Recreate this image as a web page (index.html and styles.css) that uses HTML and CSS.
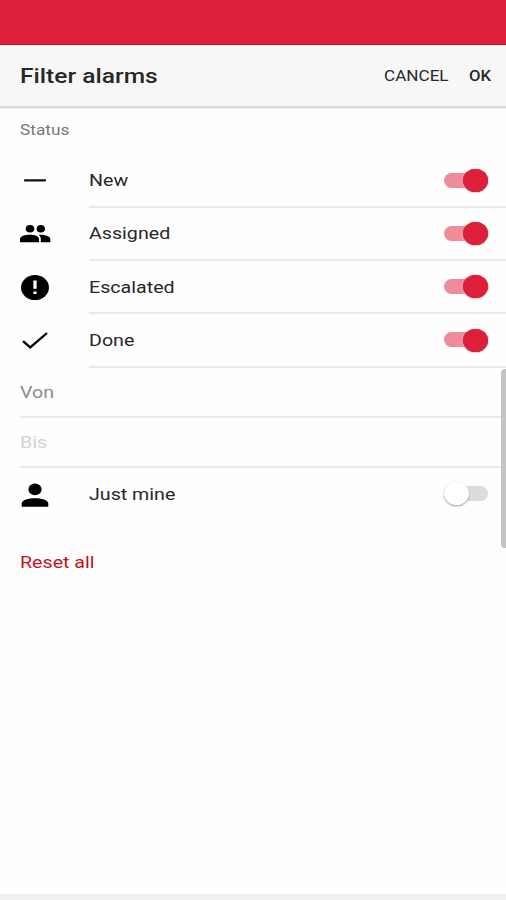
FILE: index.html
```html
<!DOCTYPE html>
<html lang="en">
<head>
<meta charset="utf-8">
<title>Filter alarms</title>
<link rel="stylesheet" href="styles.css">
</head>
<body>
<div class="screen">
  <div class="statusbar"></div>
  <header class="toolbar">
    <h1 class="title wide">Filter alarms</h1>
    <div class="cancel"><span class="wide">CANCEL</span></div>
    <div class="ok"><span class="wide">OK</span></div>
  </header>
  <main>
    <div class="section"><span class="wide">Status</span></div>
    <div class="row">
      <svg class="icon" viewBox="0 0 30 26"><path d="M5 13.4H25" stroke="#111" stroke-width="2.1" stroke-linecap="round"/></svg>
      <div class="cell"><span class="wide">New</span><i class="toggle on"></i></div>
    </div>
    <div class="row">
      <svg class="icon" viewBox="0 0 30 26"><ellipse cx="10" cy="8.7" rx="4.3" ry="3.8"/><ellipse cx="20.8" cy="8.7" rx="4.2" ry="3.8"/><path d="M0 22.3V19C0 16.2 5 14.7 10 14.7S19 16.2 19 19V22.3ZM20.8 22.3V19C20.8 17.1 20 15.8 18.5 14.8C24 14.3 30.3 16 30.3 19V22.3Z"/></svg>
      <div class="cell"><span class="wide">Assigned</span><i class="toggle on"></i></div>
    </div>
    <div class="row">
      <svg class="icon" viewBox="0 0 30 26"><ellipse cx="15" cy="13.6" rx="14" ry="12.5"/><path d="M13.4 6.6H16.6V14.8H13.4ZM13.4 17.4H16.6V20.1H13.4Z" fill="#fff"/></svg>
      <div class="cell"><span class="wide">Escalated</span><i class="toggle on"></i></div>
    </div>
    <div class="row">
      <svg class="icon" viewBox="0 0 30 26"><path d="M3 14.2L10.2 20.4L27 6" fill="none" stroke="#000" stroke-width="2.3"/></svg>
      <div class="cell"><span class="wide">Done</span><i class="toggle on"></i></div>
    </div>
    <div class="date"><span class="wide">Von</span></div>
    <div class="date empty"><span class="wide">Bis</span></div>
    <div class="row mine">
      <svg class="icon" viewBox="0 0 30 26"><ellipse cx="15" cy="7.4" rx="6.6" ry="5.9"/><path d="M1.7 24.7V21.5C1.7 18 8.6 16.2 15 16.2S28.3 18 28.3 21.5V24.7Z"/></svg>
      <div class="cell"><span class="wide">Just mine</span><i class="toggle"></i></div>
    </div>
    <div class="reset"><span class="wide">Reset all</span></div>
  </main>
  <div class="scrollbar"></div>
  <div class="bottom"></div>
</div>
</body>
</html>
```
FILE: styles.css
```css
* { box-sizing: border-box; }
body { margin: 0; background: #fff; }
.screen {
  position: relative;
  display: flex;
  flex-direction: column;
  width: 506px;
  height: 900px;
  overflow: hidden;
  background: #fefefe;
  color: #272727;
  font: 400 17px/20px Roboto, sans-serif;
}
.wide { display: inline-block; transform: scaleX(1.155); transform-origin: 0 50%; white-space: nowrap; }
.statusbar { height: 45px; background: #de1f3a; border-bottom: 1px solid #cf1230; }
.toolbar {
  display: flex;
  align-items: center;
  height: 61px;
  padding-left: 20px;
  background: #f7f7f7;
  box-shadow: 0 1px 0 #d6d6d6, 0 2px 0 #d9d9d9, 0 3px 1px #ececec;
}
.title { flex: 1; margin: 0; font-size: 21px; line-height: 24px; font-weight: 500; transform: scaleX(1.17); }
.cancel, .ok { padding-top: 2px; font-size: 14.5px; }
.cancel { width: 85px; }
.cancel .wide { transform: scaleX(1.18); }
.ok { width: 37px; font-weight: 500; }
main { flex: 1; }
.section { height: 48.6px; padding: 15px 0 0 20px; color: #777; font-size: 14.5px; }
.section .wide { transform: scaleX(1.19); }
.row { display: flex; height: 53.3px; padding-left: 20px; }
.icon { width: 30px; height: 26px; margin: 12.5px 39px 0 0; overflow: visible; flex: none; }
.cell {
  display: flex;
  flex: 1;
  justify-content: space-between;
  align-items: flex-start;
  padding: 15.4px 18px 0 0;
  border-bottom: 2px solid #e9e9e9;
}
.toggle { position: relative; width: 44px; height: 15px; margin-top: 2.6px; border-radius: 8px; background: #dcdcdc; }
.toggle::after {
  content: "";
  position: absolute;
  left: -0.5px;
  top: -3.8px;
  width: 25px;
  height: 23px;
  border-radius: 50%;
  background: #fff;
  box-shadow: 0 1px 2px #999;
}
.toggle.on { background: #ee8c9b; }
.toggle.on::after { left: 19px; background: #de1f3a; box-shadow: 0 0 1px #c01830, 0 1px 2px #ddd; }
.date { height: 50.2px; margin-left: 20px; padding-top: 14.4px; border-bottom: 2px solid #e9e9e9; color: #8c8c8c; }
.date.empty { color: #d2d2d2; }
.mine .cell { border: 0; }
.mine .icon { margin-top: 13.5px; }
.reset { padding: 30.4px 0 0 20px; color: #c41220; }
.scrollbar { position: absolute; left: 501px; top: 369px; width: 8px; height: 179px; border-radius: 4px; background: #c4c4c4; }
.bottom { height: 6px; background: #f1f1f1; }
```
